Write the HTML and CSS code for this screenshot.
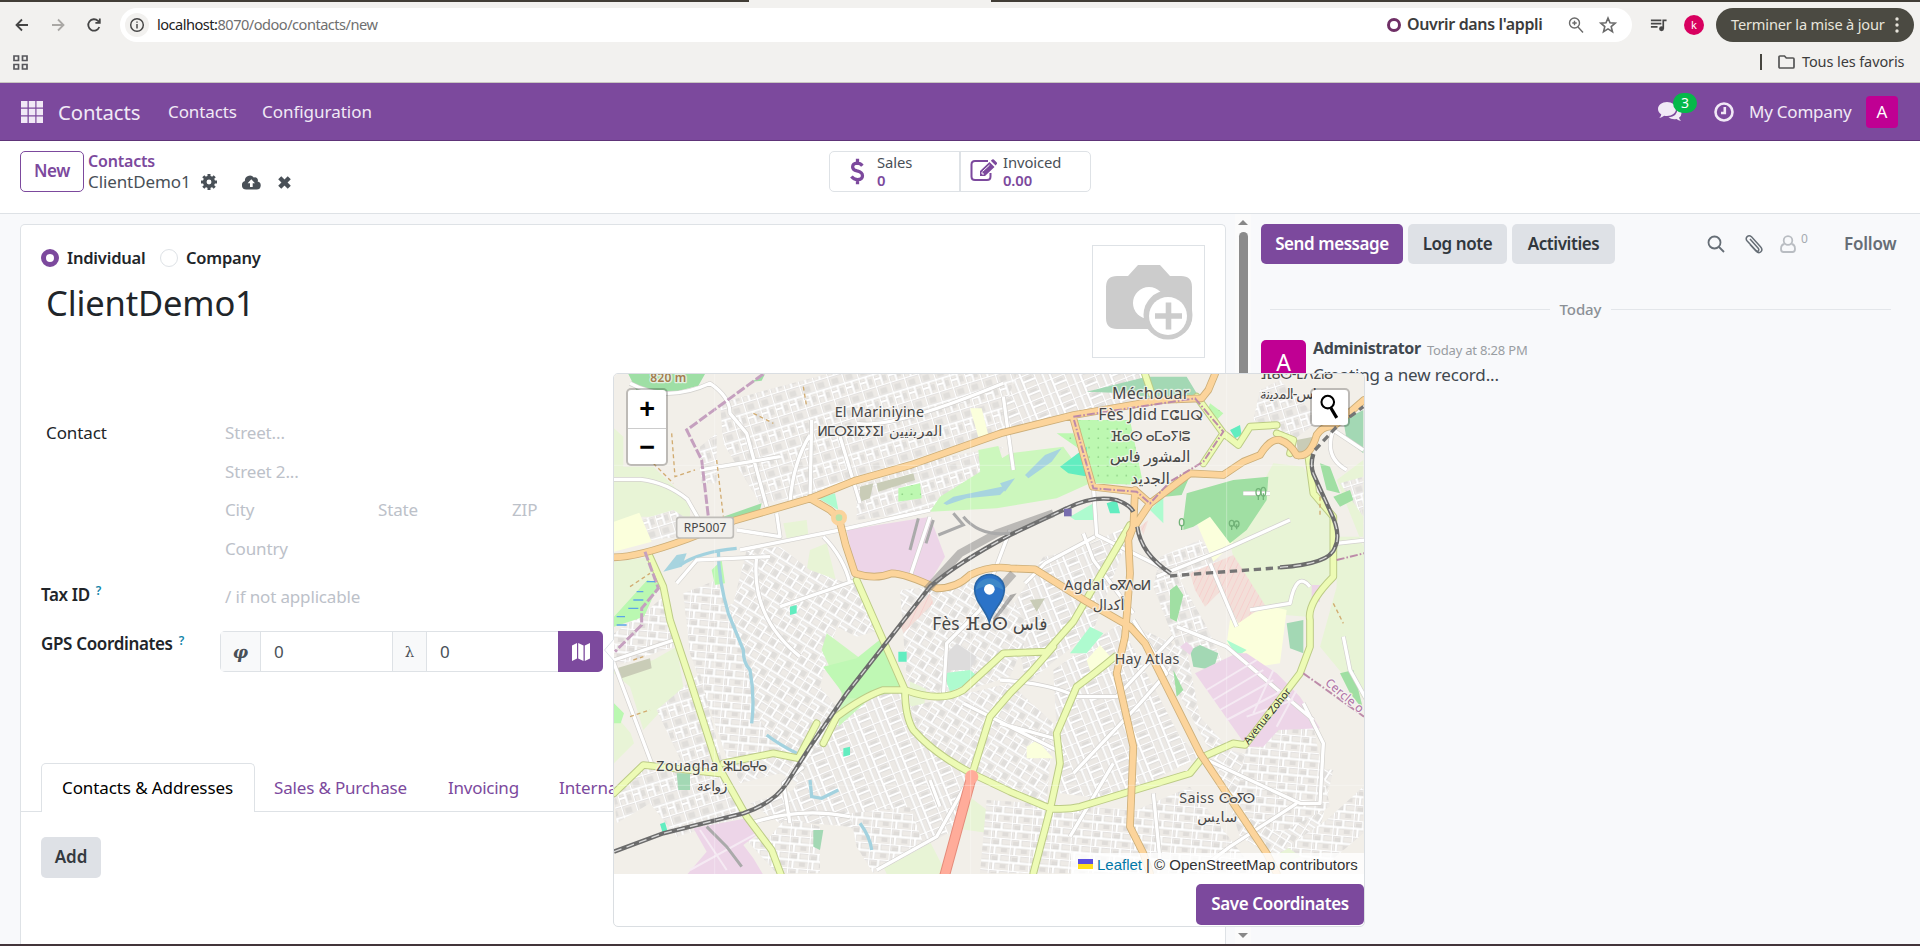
FILE: index.html
```
<!DOCTYPE html>
<html lang="en">
<head>
<meta charset="utf-8">
<title>Contacts</title>
<link rel="stylesheet" href="styles.css">
</head>
<body>
<div class="tabstrip"><span class="active-tab"></span></div>
<header class="browser">
  <div class="toolbar">
    <svg class="nav-ic" viewBox="0 0 20 20"><path d="M16 10H5M10 4.5 4.5 10l5.500 5.500"/></svg>
    <svg class="nav-ic off" viewBox="0 0 20 20"><path d="M4 10h11M10 4.500l5.500 5.500L10 15.500"/></svg>
    <svg class="nav-ic" viewBox="0 0 20 20"><path d="M15.300 12A5.700 5.700 0 1 1 14 5.900l1.500 1.600M15.800 3.500v4.400h-4.400"/></svg>
    <div class="omnibox">
      <span class="info"><svg viewBox="0 0 20 20"><circle cx="10" cy="10" r="7"/><path d="M10 9v5M10 6v1.600"/></svg></span>
      <span class="url"><b>localhost:</b>8070/odoo/contacts/new</span>
      <span class="open-app"><i></i><span>Ouvrir dans l'appli</span></span>
      <svg class="omni-ic zoom" viewBox="0 0 20 20"><circle cx="8.500" cy="8" r="5"/><path d="m12 12 5 5.500M8.500 5.800v4.400M6.300 8h4.400"/></svg>
      <svg class="omni-ic" viewBox="0 0 20 20"><path d="m10 3 2 4.800 5.200.4-4 3.400 1.300 5.100-4.500-2.800-4.500 2.800 1.300-5.100-4-3.400L8 7.800z"/></svg>
    </div>
    <svg class="queue" viewBox="0 0 20 20"><path d="M2 4.500h11M2 8h11M2 11.500h7M15 13.500V4.500h3.500" fill="none" stroke="#474747" stroke-width="1.800"/><circle cx="13.200" cy="13.500" r="2.600" fill="#474747"/></svg>
    <span class="profile">k</span>
    <span class="update"><span>Terminer la mise à jour</span><svg viewBox="0 0 4 18"><circle cx="2" cy="3" r="1.700"/><circle cx="2" cy="9" r="1.700"/><circle cx="2" cy="15" r="1.700"/></svg></span>
  </div>
  <div class="bookmarks">
    <svg class="apps" viewBox="0 0 15 15"><path d="M1 1h4.500v4.500H1zM9.500 1H14v4.500H9.500zM1 9.500h4.500V14H1zM9.500 9.500H14V14H9.500z"/></svg>
    <span class="divider"></span>
    <svg class="folder" viewBox="0 0 17 14"><path d="M1 12V2q0-1 1-1h4.500l1.800 2H15q1 0 1 1v8q0 1-1 1H2q-1 0-1-1z"/></svg>
    <span class="favs">Tous les favoris</span>
  </div>
</header>

<nav class="navbar">
  <svg class="grid-ic" viewBox="0 0 22 22"><path d="M0 0h6.500v6.500H0zM7.800 0h6.500v6.500H7.800zM15.500 0H22v6.500h-6.500zM0 7.800h6.500v6.500H0zM7.800 7.800h6.500v6.500H7.800zM15.500 7.800H22v6.500h-6.500zM0 15.500h6.500V22H0zM7.800 15.500h6.500V22H7.800zM15.500 15.500H22V22h-6.500z"/></svg>
  <span class="brand">Contacts</span>
  <span class="menu m1">Contacts</span>
  <span class="menu m2">Configuration</span>
  <span class="chat">
    <svg viewBox="0 0 24 20"><path d="M9 0c5 0 9 3 9 7s-4 7-9 7q-1.500 0-2.800-.3Q3.500 15.700 1.300 16q1.800-1.800 2-3.600Q0 10.300 0 7c0-4 4-7 9-7z"/><path d="M19.500 6q4 1.800 4 5.200 0 2.700-2.500 4.500.3 1.600 2 3.300-2.600-.3-4.600-2-4.400.8-7.900-1.600 9-.6 9-9.400z"/></svg>
    <span class="badge">3</span>
  </span>
  <svg class="clock" viewBox="0 0 20 20"><circle cx="10" cy="10" r="8.500"/><path d="M10.800 5v6H7"/></svg>
  <span class="company">My Company</span>
  <span class="user">A</span>
</nav>

<div class="control">
  <button class="btn-new">New</button>
  <div class="crumbs">
    <a>Contacts</a>
    <div class="crumb-row">
      <span>ClientDemo1</span>
      <svg class="gear" viewBox="0 0 16 16"><circle cx="8" cy="8" r="4.300" fill="none" stroke="#495057" stroke-width="3.700"/><path d="M8 0v3M8 13v3M0 8h3M13 8h3M2.300 2.300l2 2M11.700 11.700l2 2M2.300 13.700l2-2M11.700 4.300l2-2" stroke="#495057" stroke-width="3"/></svg>
      <svg class="cloud" viewBox="0 0 19 14"><path d="M15.600 6.100A3 3 0 0 0 11.800 2 5 5 0 0 0 2.900 5.600 4.300 4.300 0 0 0 4.300 14h10.400a4 4 0 0 0 .9-7.900z" fill="#495057"/><path d="M9.300 3.700 13 7.700h-2.300V11.500H8V7.700H5.600z" fill="#fff"/></svg>
      <svg class="times" viewBox="0 0 12 12"><path d="m1.600 1.600 8.800 8.800M10.400 1.600l-8.800 8.800"/></svg>
    </div>
  </div>
  <div class="stats">
    <div class="stat s1">
      <svg viewBox="0 0 16 27"><path d="M13.200 7.300Q11 4.600 7.700 4.600 2.800 4.800 2.800 8.600q0 3 4.700 4.300 5.800 1.400 5.800 5 0 4-5.300 4.200-4 0-6.500-3.200M8 0v5M8 22v5" fill="none" stroke="#7c499d" stroke-width="3.500"/></svg>
      <div><span>Sales</span><b>0</b></div>
    </div>
    <div class="stat s2">
      <svg viewBox="0 0 27 22"><path d="M18 2H5Q1.500 2 1.500 5.500v12Q1.500 21 5 21h12q3.500 0 3.500-3.500V14" fill="none" stroke="#7c499d" stroke-width="2"/><path d="M10 17v-5L19.500 3l5 5-9.500 9zM20.800 1.800l1.400-1.300q.8-.7 1.600 0l3 3q.7.800 0 1.600L25.600 6.600z" fill="#7c499d"/><path d="m12.500 12.500 7-6.500M12 13v2h2" stroke="#fff" fill="none"/></svg>
      <div><span>Invoiced</span><b>0.00</b></div>
    </div>
  </div>
</div>

<main class="content">
  <section class="sheet">
    <div class="sheet-top">
      <div>
        <div class="radios">
          <i class="radio on"></i><span class="r1">Individual</span>
          <i class="radio"></i><span class="r2">Company</span>
        </div>
        <h1>ClientDemo1</h1>
      </div>
      <div class="photo"><svg viewBox="0 0 88 76"><path d="M12 12h11L33 1h22l10 11h11q11 0 11 11v29q0 10-7 15H52l-9-2H12Q1 65 1 54V23Q1 12 12 12z" fill="#ccc"/><circle cx="44" cy="39" r="16" fill="#fff"/><circle cx="63" cy="51" r="24.500" fill="#ccc"/><circle cx="63" cy="52" r="19" fill="#fff"/><path d="M63.500 38.500v27M50 52h27" stroke="#ccc" stroke-width="5.600"/></svg></div>
    </div>
    <div class="form">
      <div class="frow"><span class="flabel plain">Contact</span><span class="ph">Street...</span></div>
      <div class="frow"><span class="flabel"></span><span class="ph">Street 2...</span></div>
      <div class="frow"><span class="flabel"></span><span class="ph city">City</span><span class="ph state">State</span><span class="ph">ZIP</span></div>
      <div class="frow"><span class="flabel"></span><span class="ph">Country</span></div>
      <div class="frow tax"><span class="flabel"><span class="tx">Tax ID</span><sup>?</sup></span><span class="ph">/ if not applicable</span></div>
      <div class="frow gps"><span class="flabel"><span class="gp">GPS Coordinates</span><sup>?</sup></span>
        <div class="group">
          <span class="addon phi">φ</span><span class="inp">0</span><span class="addon lam">λ</span><span class="inp">0</span>
          <button class="mapbtn"><svg viewBox="0 0 18 18"><path d="M0 2.500 5 0v15.500L0 18zM6.200 0l5.300 2.500V18l-5.300-2.500zM12.800 2.500 18 0v15.500L12.800 18z"/></svg></button>
        </div>
      </div>
    </div>
    <div class="tabs">
      <span class="tab t-on">Contacts &amp; Addresses</span><span class="tab t2">Sales &amp; Purchase</span><span class="tab t3">Invoicing</span><span class="tab">Internal Notes</span>
    </div>
    <button class="btn-add">Add</button>
  </section>
  <div class="scroll"><i class="up"></i><span class="thumb"></span><i class="down"></i></div>
  <aside class="chatter">
    <div class="chat-bar">
      <button class="send">Send message</button><button class="b-log">Log note</button><button class="b-act">Activities</button>
      <svg class="c-search" viewBox="0 0 18 18"><circle cx="7.500" cy="7.500" r="6"/><path d="m12 12 5 5"/></svg>
      <svg class="c-clip" viewBox="0 0 18 20"><path d="m5 5 8 9q1.500 1.800.3 2.800t-2.800-.7L2.200 7Q.2 4.500 2.200 2.600t4.300.2l9 10q2.600 3 .4 5t-5-.8L5 10.500"/></svg>
      <svg class="c-user" viewBox="0 0 16 18"><path d="M4.500 9Q1 9.500 1 14q0 3 2.500 3h9q2.500 0 2.500-3 0-4.500-3.500-5"/><circle cx="8" cy="5.500" r="4.300"/></svg>
      <span class="c-count">0</span><span class="follow">Follow</span>
    </div>
    <div class="today"><i></i><span>Today</span><i></i></div>
    <div class="msg">
      <span class="avatar">A</span>
      <div><p class="who"><b>Administrator</b><span>Today at 8:28 PM</span></p><p class="body">Creating a new record...</p></div>
    </div>
  </aside>
</main>
<div class="osbar"></div>

<div class="popover">
  <div class="map">
    <svg viewBox="12 12 2250 1500" class="map-art">
      <defs>
        <pattern id="ua" width="44" height="70" patternUnits="userSpaceOnUse" patternTransform="rotate(-17)"><path d="M0 0h44v70H0z" fill="#eeebe7"/><path d="M10 10h20v18H10zM22 44h16v18H22z" fill="#e0dedb"/><path d="M0 0h44M0 34h44M0 0v70M22 34v36M0 50h22" stroke="#d6d4d2" stroke-width="10" fill="none"/><path d="M0 0h44M0 34h44M0 0v70M22 34v36M0 50h22" stroke="#fff" stroke-width="7" fill="none"/></pattern>
        <pattern id="ub" width="52" height="60" patternUnits="userSpaceOnUse" patternTransform="rotate(32)"><path d="M0 0h52v60H0z" fill="#eeebe7"/><path d="M8 6h16v16H8zM30 36h16v18H30z" fill="#e0dedb"/><path d="M0 0h52M0 28h52M0 0v60M26 0v28M0 44h26v16" stroke="#d6d4d2" stroke-width="10" fill="none"/><path d="M0 0h52M0 28h52M0 0v60M26 0v28M0 44h26v16" stroke="#fff" stroke-width="7" fill="none"/></pattern>
        <pattern id="uc" width="40" height="84" patternUnits="userSpaceOnUse" patternTransform="rotate(68)"><path d="M0 0h40v84H0z" fill="#ece9e5"/><path d="M8 10h18v22H8z" fill="#dedcd9"/><path d="M0 0h40M0 42h40M0 0v84M20 0v42M0 62h40" stroke="#d5d3d1" stroke-width="10" fill="none"/><path d="M0 0h40M0 42h40M0 0v84M20 0v42M0 62h40" stroke="#fff" stroke-width="7" fill="none"/></pattern>
        <pattern id="ud" width="60" height="48" patternUnits="userSpaceOnUse" patternTransform="rotate(5)"><path d="M0 0h60v48H0z" fill="#eeebe7"/><path d="M8 8h20v12H8zM34 30h18v12H34z" fill="#dfdcd9"/><path d="M0 0h60M0 24h60M0 0v48M30 0v24M15 24v24" stroke="#d6d4d2" stroke-width="10" fill="none"/><path d="M0 0h60M0 24h60M0 0v48M30 0v24M15 24v24" stroke="#fff" stroke-width="7" fill="none"/></pattern>
        <pattern id="dots" width="28" height="28" patternUnits="userSpaceOnUse"><path d="M0 0h28v28H0z" fill="#bdf8b1"/><circle cx="9" cy="9" r="2.500" fill="#8ccf83"/></pattern>
        <pattern id="hatch" width="16" height="16" patternUnits="userSpaceOnUse" patternTransform="rotate(25)"><path d="M0 0h16v16H0z" fill="#f3dfd9"/><path d="M0 0v16" stroke="#f8caca" stroke-width="4"/></pattern>
      </defs>
      <path d="M0 0h2280v1520H0z" fill="#f2efe9"/>
      <!-- open land -->
      <g fill="#e8f4d6">
        <path d="M12 175 40 200v90h90l110 105v45H90l-78 20zM12 575l118-15 20 90-50 60-88 50zM130 870l70-40 20 120-120 130-40-130-48-40V900zM12 1030l50 60 10 30-60 60zM600 540l50-20 30 120-60 20-30-60zM520 460l70-10 5 45-65 10zM1040 1250l130 100-30 40-140-20zM820 1490l140-75 50 97H830zM1860 520l130-240 90 10 90 170-10 170-70 110-130-10-60-50zM2180 500h90v500l-140-170 50-180zM2180 330l80 200V270zM2000 1440l100-70 50 60-130 50zM900 870l50 70-10 90-40-20z"/>
      </g>
      <!-- built-up blocks -->
      <path d="M330 100l140-40 190-50h620l-40 150-490 160-170 60-130 20-110-180zM270 230l50-40v150h-45z" fill="url(#ua)"/>
      <path d="M1220 12h380l60 60-290 70-210 40zM1400 540l170-80-120 320-200 160-50-220 100-160z" fill="url(#uc)"/>
      <path d="M740 350l230-80 150-30 60-10-100 140-100 50-240 30zM90 450l100-30 80 50-60 30-90 10z" fill="url(#ua)"/>
      <path d="M410 540l100-10 90 70 110 40 30-10 70 150-70 20-60-30-50 180 90 110-140 190-70-40-120 30-60-160-90-260 0-60 130-60z" fill="url(#ub)"/>
      <path d="M220 670l100-40 60 140 60 270 70 90-150 60-120-340zM12 890l180-60-20-160-70 60-90 60z" fill="url(#ud)"/>
      <path d="M140 1020l130-110 70 280 60 150-200 60-80-100-100 60-8-80 90-90 110-20z" fill="url(#ua)"/>
      <path d="M610 1150l110-190 160 0 60 130 140 120-30 160-220 120-110-120-120-10-90 0-90-60 130-40z" fill="url(#uc)"/>
      <path d="M410 1410l70-10 50-60 100 30v140H500zM720 1330l180-20 40 110-150 90-50-80z" fill="url(#ud)"/>
      <path d="M870 660l300-30 90 150-60 140-200 60-110-50zM900 1010l300-70 130 120-20 240-250-100-120-90z" fill="url(#ub)"/>
      <path d="M1330 900l200-140 180 340 60 60-260 130-160-20z" fill="url(#uc)"/>
      <path d="M1130 1290l450 30 160-70 200 260h-830z" fill="url(#ud)"/>
      <path d="M1600 780l130 60 40 200 90 100 110 30 200 30-40 180-140 80-100-60-80-240z" fill="url(#ub)"/>
      <path d="M1910 1130l40-70 160 10 50 240-150 80-140-70zM2030 1430l120-80 110-100v140l-130 110z" fill="url(#ud)"/>
      <path d="M1650 560l120-50 60 60-120 60 80 140 50 110-140-50-70-180zM1950 60l60-30 120 120-80 60-120-60zM2190 340l70-20v120z" fill="url(#ua)"/>
      <!-- parks, woods, farmland, works -->
      <path d="M55 12h230l-20 35-75 20-110-5zM425 35l40-23-10 20zM340 440l115-40-5 20-100 30z" fill="#9edfa5"/>
      <path d="M12 455l76-27 37 87-113 30zM1080 115h35l20 80-30 5zM1760 460l65-30 45 90-60 55zM1860 750l130-40 40 10-20 160-70 10-90-70zM1250 1130l30-20 50 55-80 0zM1430 870l40-45 35 40-60 50z" fill="#fbffdc"/>
      <path d="M960 425l30-45 210-130 160-20 80 110-100 45-180 30zM1105 240l60-12 28 90-80 15zM650 790l120 90-35 40 50 60-100 90 10-100-60-130zM770 870l50-60 60 150-115 25-65-70z" fill="#ccf7bd"/>
      <path d="M640 890l100-25 75-60 70 150-125 30-50 0-60-80z" fill="#bff8b4"/>
      <path d="M12 740l100-110 35 10-45 100-90 30zM305 600l30-30 10 70-30 5zM12 1000l30 30-10 30h-20z" fill="#baf8b1"/>
      <path d="M1390 150h170l40 195-150-5zM1340 190h50l15 45zM865 355l65-15 5 45-70 10zM1800 100l40 30-20 20-30-20z" fill="url(#dots)"/>
      <path d="M1620 420l40-40v80zM625 385l50-15 10 50zM1000 910l80-10 30 25-90 40zM1380 850l60-80 40 20-50 60zM1380 440l70-40 5 50h-60zM1850 810l60 30-30 20z" fill="#aefbcf"/>
      <path d="M1350 290l80-60 5 90-60-10zM1490 400l30-10 10 40h-30zM540 710l20-5v25l-20 5zM865 845h25v30h-25zM700 1135l20-5v25l-20 5zM150 1362l15-5 8 28-15 4zM1860 180l30-15 5 30-20 10z" fill="#62edc0"/>
      <path d="M1720 450l10-80 140-40 105-10-5 70-60 90-50 40-60-80-50 30-30 10zM1665 380l60-60 20-15-30 70zM2130 280l30 10 30 80-40-10zM2170 380l50-20 10 30-40 20zM1680 660l20-15 20 30-20 80-20-10zM1690 900l30 60-20 20zM2190 910l40-10 30 120-40-50z" fill="#a0dfa3"/>
      <path d="M1430 65l180-45 120 0 30 50-60 30-150-30zM2200 150l60-30v130l-50-40zM1740 840l30-15 55 25-15 50-60-10zM2030 760l50-10v100l-40-15zM200 1210h40v50h-35zM610 1380h30l-10 60-20-10z" fill="#a3d8b4"/>
      <path d="M710 480l250-40 45 120-45 75-60-20-50-10-70 15-45-20zM250 1375l160-30 30 50-40 30 30 40 30 50H230l60-70zM1710 830l20-15 20 20-10 20zM2105 645h25v50h-25zM1755 910l125-60 30 0 90 60 70 70 60 95-125 5-45 50h-50z" fill="#edd5e8"/>
      <path d="M1740 610l130-55 95 150-80 55-50-100-50 50-30-50zM1590 470l25-20-15 45zM870 760l90-90 10 30-90 90z" fill="url(#hatch)"/>
      <path d="M20 895l100-30 5 30-90 30zM750 350l40-10-10 45-30 10zM800 340l110-30 5 20-110 35zM2060 210l50-10-5 40-40 30zM1260 690l45-5-25 40z" fill="#c9ccb7"/>
      <path d="M1010 850l30-30 60 40-20 40-70 0z" fill="#dddcdc"/>
      <!-- water -->
      <path d="M1245 315l60-60 50-20-30 40-70 50zM1000 400l30-20 170-35-30 30-100 10-60 20zM1170 340l45-15-30 40zM160 605l40-50 30-5-15 40z" fill="#a7d4df"/>
      <path d="M210 585q60-40 170-50M325 540q0 90 30 190l45 110q0 40 20 60 15 80 5 160M470 1095q40 30 90 55M600 1230l5 50 30 5 50-25M750 1360q30 40 35 80" fill="none" stroke="#a3d2df" stroke-width="10"/>
      <!-- lanes -->
      <g fill="none" stroke="#d3d1ce" stroke-width="14" stroke-linejoin="round"><path d="M12 328h80q80 10 140 60l40 70M60 40q110 60 240 0 60 40 60 90l50 60 60 220M270 300l240-40M540 395q10-120 60-200M600 390l5-240M690 200l60 200M740 160q100 20 440-120M1180 80l30 220M390 540l300-60 270-60M500 430l10 70-130-20M740 630l-230 80M640 500q60 60 80 140M960 440l-60 180M200 640l60-70 220-10M440 560q-20 180 130 300M12 870l180-60M12 880l120 320M540 1360l-20-120 60-50M720 1340q-150-30-300 20M800 1500l180-100 90-160M1450 345l10 150 200 100M1455 500l-150 80-60 60M1420 490l30 80 120 160M1640 620l200-80 200-90M1800 580l80 190M1700 770l150 60 260 220M1570 750l100 160-80 90-200 210M1170 930q150 10 230 50h120l170-180M1200 480l-90 240-100 100-10 160M1170 1060l180 50M1900 370l80 0M2180 520l90-10M1770 1160l300 140h60l10-180-60-120M2060 1300l-200 130-80 60M2260 240l-90-60q-30 80 40 120M1920 720l120-20q20-100 60-50M2200 800l20 100 50 90M1060 1000l300 150M1510 1180l-130 220M960 1230l30 80M1630 1270l20 200"/></g>
      <path fill="none" stroke="#fff" stroke-width="10" stroke-linejoin="round" d="M12 328h80q80 10 140 60l40 70M60 40q110 60 240 0 60 40 60 90l50 60 60 220M270 300l240-40M540 395q10-120 60-200M600 390l5-240M690 200l60 200M740 160q100 20 440-120M1180 80l30 220M390 540l300-60 270-60M500 430l10 70-130-20M740 630l-230 80M640 500q60 60 80 140M960 440l-60 180M200 640l60-70 220-10M440 560q-20 180 130 300M12 870l180-60M12 880l120 320M540 1360l-20-120 60-50M720 1340q-150-30-300 20M800 1500l180-100 90-160M1450 345l10 150 200 100M1455 500l-150 80-60 60M1420 490l30 80 120 160M1640 620l200-80 200-90M1800 580l80 190M1700 770l150 60 260 220M1570 750l100 160-80 90-200 210M1170 930q150 10 230 50h120l170-180M1200 480l-90 240-100 100-10 160M1170 1060l180 50M1900 370l80 0M2180 520l90-10M1770 1160l300 140h60l10-180-60-120M2060 1300l-200 130-80 60M2260 240l-90-60q-30 80 40 120M1920 720l120-20q20-100 60-50M2200 800l20 100 50 90M1060 1000l300 150M1510 1180l-130 220M960 1230l30 80M1630 1270l20 200"/>
      <path fill="none" stroke="#f5eaf3" stroke-width="6" d="M1790 960l150-90M1810 990l150-90M1830 1020l160-90M1850 1050l170-90M1910 1040l140-50M1990 900l-60 130M2060 960l-60 110M240 1500l200-110M270 1380l80 120"/>
      <!-- secondary and primary roads -->
      <g fill="none" stroke-linejoin="round" stroke-linecap="round">
        <path class="y0" d="M115 550l45 100 20 100 60 180 80 250 90 160 75 100 30 80M740 630l145 330q0 80 25 120 60 70 175 130l115 55 120 50q50 5 90-5l330-100 40-50 90-40 35 5 165-215 30-80v-80q-10-50 70-130v-180l-60-70-15-110M640 1120l40-80q80-60 140-80l65 0q110 40 175 0l120-110 130-5 80-90 170-290M1515 860q-60 50-115 90l-60 140 10 90-30 140-50 190M1090 1200l50-160 60-70 60-60 70-80M12 1270l88-85 230 25M340 1180l150-30 75 15 55-105M1605 12l20 60M1760 80l80 110-60 90M1840 190l45 35 35-55 80-5M2000 190l50 20-10 40" />
        <path class="y1" d="M115 550l45 100 20 100 60 180 80 250 90 160 75 100 30 80M740 630l145 330q0 80 25 120 60 70 175 130l115 55 120 50q50 5 90-5l330-100 40-50 90-40 35 5 165-215 30-80v-80q-10-50 70-130v-180l-60-70-15-110M640 1120l40-80q80-60 140-80l65 0q110 40 175 0l120-110 130-5 80-90 170-290M1515 860q-60 50-115 90l-60 140 10 90-30 140-50 190M1090 1200l50-160 60-70 60-60 70-80M12 1270l88-85 230 25M340 1180l150-30 75 15 55-105M1605 12l20 60M1760 80l80 110-60 90M1840 190l45 35 35-55 80-5M2000 190l50 20-10 40" />
        <path class="o0" d="M12 562q70 0 220-55l140-55 230-67 130-52 170-48 270-95 220-55 260-45 123-5 20-25 20-48M600 385l60 35 27 25 20 80 28 85q60 20 110 0 40 0 135 45 60 0 100-40 60-30 120-20l75 3 155 97 130 75 45 50 165 330 100 150 100 150 30 60M1390 145l58 205 132 15 40 35M1575 360l-5 110-15 40 5 100-15 190-25 110 50 220-10 240 40 80 20 60M1560 490l60-90 120-90 100 5 60-40 50-20q30-50 60-45 30 10 50 45 40 10 60-60 20-30 50-25l92-80"/>
        <path class="o1" d="M12 562q70 0 220-55l140-55 230-67 130-52 170-48 270-95 220-55 260-45 123-5 20-25 20-48M600 385l60 35 27 25 20 80 28 85q60 20 110 0 40 0 135 45 60 0 100-40 60-30 120-20l75 3 155 97 130 75 45 50 165 330 100 150 100 150 30 60M1390 145l58 205 132 15 40 35M1575 360l-5 110-15 40 5 100-15 190-25 110 50 220-10 240 40 80 20 60M1560 490l60-90 120-90 100 5 60-40 50-20q30-50 60-45 30 10 50 45 40 10 60-60 20-30 50-25l92-80"/>
        <circle cx="687" cy="443" r="17" fill="#b9e3a9" stroke="#fad39c" stroke-width="14"/>
        <path d="M1085 1220l-82 300" stroke="#e58b7a" stroke-width="32"/><path d="M1085 1220l-82 300" stroke="#ffac9a" stroke-width="26"/><circle cx="1085" cy="1220" r="20" fill="#ffac9a"/>
      </g>
      <!-- railways and boundaries -->
      <g fill="none">
        <path class="rail" d="M12 1445l148-55 240-60q90-30 130-90l70-110 110-160 250-320q80-70 240-155l170-80q80-40 150-25 40 15 50 35M1582 470q10 80 100 140M2010 592q150-10 165-60 20-40-15-110l-50-110q-10-30 0-60"/>
        <path class="rail-w" d="M12 1445l148-55 240-60q90-30 130-90l70-110 110-160 250-320q80-70 240-155l170-80q80-40 150-25 40 15 50 35M1582 470q10 80 100 140M2010 592q150-10 165-60 20-40-15-110l-50-110q-10-30 0-60"/>
        <path d="M1680 618l60-5 270-20M2115 240l65-70 80-60" stroke="#757575" stroke-width="10" stroke-dasharray="22 14"/>
        <path d="M950 660l100-110 110-60 170-60M1130 700l80-90" stroke="#777" stroke-opacity=".45" stroke-width="24"/>
        <path d="M925 445l-25 95M970 450l-22 70M985 495l75-30-30-35M1060 440q50 60 140 50M290 1370l60 60 45 60" stroke="#aaa" stroke-width="9"/>
        <path d="M460 12 230 180l45 90 20 170M105 545l40 110-50 60v50l-80 80" stroke="#c5a0bf" stroke-width="9" stroke-dasharray="28 7"/>
        <path d="M1390 140l365-55 85 100-60 90-100 60-60 65-40-35-130-10-58-205M2080 910l182 130M2180 570l82-20" stroke="#bd8ba9" stroke-width="6" stroke-dasharray="24 6 5 6"/>
        <path d="M60 650l60-40M185 190l10 130 60-20M130 280l60 60M320 270l20 170M430 130l60 30M580 50l10 60M2130 380v60M2170 700l30 60M70 870l30-10M60 1040l60-20" stroke="#d1ab70" stroke-width="4" stroke-dasharray="12 9"/>
        <path d="M20 740h25M55 715h30M20 765h30M70 690h30M110 635h25M80 665h20" stroke="#5ca5e8" stroke-width="4"/>
        <path d="M12 286h2250M12 1246h2250M314 12v1500M1082 12v1500M1850 12v1500" stroke="#fff" stroke-opacity=".45" stroke-width="2"/>
      </g>
      <path d="M1362 416h23v23h-23z" fill="#786dae"/>
      <g fill="none" stroke="#72b378" stroke-width="4"><path d="M1945 390v-15M1960 390v-20M1715 480v-15M1865 480v-15M1880 478v-15"/><ellipse cx="1945" cy="367" rx="7" ry="11"/><ellipse cx="1960" cy="365" rx="7" ry="13"/><ellipse cx="1715" cy="457" rx="7" ry="11"/><ellipse cx="1865" cy="460" rx="7" ry="9"/><ellipse cx="1880" cy="462" rx="7" ry="9"/></g>
      <rect x="200" y="442" width="170" height="62" rx="8" fill="#f2f0ec" stroke="#bfbdb9" stroke-width="5"/>
      <!-- place names -->
      <g class="names" text-anchor="middle">
        <text x="285" y="486" class="shield" textLength="128">RP5007</text>
        <text x="175" y="37" class="peak" textLength="108">820 m</text>
        <text x="808" y="140" textLength="268">El Mariniyine</text>
        <text x="722" y="199" class="tif" textLength="200">ⵍⵎⵔⵉⵏⵉⵢⵉⵏ</text><text x="917" y="197" textLength="160">المرينيين</text>
        <text x="1622" y="88" class="mid" textLength="232">Méchouar</text>
        <text x="1553" y="150" class="mid" textLength="176">Fès Jdid</text><text x="1715" y="150" class="tif" textLength="128">ⵎⵛⵡⵕ</text>
        <text x="1621" y="213" class="tif" textLength="242">ⴼⴰⵙ ⴰⵎⴰⵢⵏⵓ</text>
        <text x="1620" y="277" class="mid" textLength="242">المشور فاس</text>
        <text x="1621" y="341" class="mid" textLength="118">الجديد</text>
        <text x="2060" y="27" class="tif" textLength="220">ⴼⴰⵙ-ⵎⴷⵉⵏⴰ</text>
        <text x="2044" y="87" textLength="190">فاس-المدينة</text>
        <text x="1423" y="661" textLength="120">Agdal</text><text x="1561" y="661" class="tif" textLength="126">ⴰⴳⴷⴰⵍ</text>
        <text x="1496" y="719" textLength="95">أكدال</text>
        <text x="1140" y="780" class="big" textLength="346"><tspan>Fès </tspan><tspan class="tif">ⴼⴰⵙ</tspan><tspan> فاس</tspan></text>
        <text x="1611" y="881" textLength="194">Hay Atlas</text>
        <text x="232" y="1204" textLength="186">Zouagha</text><text x="405" y="1204" class="tif" textLength="134">ⵣⵡⴰⵖⴰ</text>
        <text x="306" y="1262" textLength="92">زواعة</text>
        <text x="1760" y="1298" textLength="104">Saiss</text><text x="1881" y="1298" class="tif" textLength="110">ⵙⴰⵢⵙ</text>
        <text x="1822" y="1356" textLength="120">سايس</text>
        <text class="street" transform="translate(1980 1045) rotate(-51)" textLength="205">Avenue Zohor</text>
        <text class="cercle" transform="translate(2196 986) rotate(40)" textLength="138">Cercle o</text>
      </g>
      <!-- position marker -->
      <path d="M1150 760l70-90-20 5-50 70z" fill="#555" opacity=".45"/>
      <path d="M1138 756c-12-40-44-60-44-98a44 44 0 0 1 89 0c0 38-33 58-45 98z" fill="#2b73c8" stroke="#2a66a5" stroke-width="5"/>
      <path d="M1097 660a42 42 0 0 1 83 0q-42-24-83 0z" fill="#3d87c8"/>
      <circle cx="1138" cy="658" r="16" fill="#fff"/>
    </svg>
    <div class="zoomctl"><button>+</button><button>−</button></div>
    <button class="geosearch"><svg viewBox="0 0 24 30"><circle cx="9.500" cy="9" r="7" fill="none" stroke="#000" stroke-width="2.300"/><path d="m13 15.500 6.500 11" stroke="#000" stroke-width="3.600"/></svg></button>
    <div class="attrib"><svg viewBox="0 0 15 10"><path d="M0 0h15v5H0z" fill="#5b4fe0"/><path d="M0 5h15v5H0z" fill="#ffe01c"/></svg><a>Leaflet</a><span>| © OpenStreetMap contributors</span></div>
  </div>
  <div class="pop-foot"><button class="save">Save Coordinates</button></div>
  <svg class="arrow" viewBox="0 0 10 22"><path d="M10 0v22L.5 11z" fill="#fff"/><path d="M10 0 .5 11 10 22" fill="none" stroke="#dee2e6"/></svg>
</div>
</body>
</html>
```
FILE: styles.css
```
* { box-sizing: border-box; }
html, body { margin: 0; height: 946px; overflow: hidden; }
body { font-family: "Noto Sans", "DejaVu Sans", sans-serif; font-size: 17px; letter-spacing: -.1px; color: #212529; background: #f8f9fb; display: flex; flex-direction: column; line-height: 1.2; }
button { font: inherit; letter-spacing: inherit; border: 0; padding: 0; }
svg { flex: none; display: block; }
p, h1 { margin: 0; font-weight: 400; }
span, button, a, b { white-space: nowrap; }

.tabstrip { height: 2px; background: #413d36; flex: none; }
.active-tab { display: block; width: 242px; height: 2px; margin-left: 749px; background: #f2f1ef; }
.browser { background: #f2f1ef; height: 81px; flex: none; border-bottom: 1px solid #c9c6c1; color: #3c3c3c; }
.toolbar { display: flex; align-items: center; height: 46px; padding: 0 6px 0 12px; }
.nav-ic { width: 20px; height: 20px; margin-right: 16px; fill: none; stroke: #454545; stroke-width: 1.8; }
.nav-ic.off { stroke: #aaa8a5; }
.omnibox { width: 1512px; height: 34px; border-radius: 17px; background: #fff; display: flex; align-items: center; padding: 0 14px 0 5px; }
.info { width: 24px; height: 24px; border-radius: 50%; background: #f2f1ef; display: grid; place-items: center; }
.info svg { width: 18px; height: 18px; fill: none; stroke: #454545; stroke-width: 1.6; }
.url { margin-left: 8px; font-size: 14.6px; letter-spacing: -.51px; color: #6f6f6f; flex: 1; }
.url b { font-weight: 400; color: #222; }
.open-app { display: flex; align-items: center; gap: 6px; font-size: 16px; letter-spacing: -.35px; font-weight: 600; margin-right: 23px; }
.open-app i { width: 14px; height: 14px; border: 3px solid #6f2f66; border-radius: 50%; }
.open-app span { width: 136px; }
.omni-ic { width: 20px; height: 20px; fill: none; stroke: #6a6a6a; stroke-width: 1.6; }
.omni-ic.zoom { margin-right: 12px; stroke-width: 1.4; }
.queue { width: 19px; height: 19px; margin-left: 17px; }
.profile { width: 20px; height: 20px; border-radius: 50%; background: #d8005f; color: #fff; font-size: 11px; display: grid; place-items: center; margin: 0 12px 0 16px; }
.update { width: 198px; height: 34px; border-radius: 17px; background: #4b4a42; color: #e8e5dc; display: flex; align-items: center; justify-content: space-between; padding: 0 15px; font-size: 14.600px; letter-spacing: -.17px; }
.update svg { width: 4px; height: 18px; fill: #e8e5dc; }
.bookmarks { display: flex; align-items: center; height: 28px; padding: 0 14px 0 13px; font-size: 14.500px; }
.apps { width: 15px; height: 15px; fill: none; stroke: #57575c; stroke-width: 1.7; margin-right: auto; }
.divider { width: 2px; height: 16px; background: #46453f; margin-right: 16px; }
.folder { width: 17px; height: 14px; fill: none; stroke: #555; stroke-width: 1.7; margin-right: 7px; }
.favs { width: 104px; letter-spacing: -.1px; }

.navbar { height: 58px; flex: none; background: #7c499d; border-bottom: 1px solid #5e3478; display: flex; align-items: center; color: #f1e9f6; padding: 1px 19px 0 21px; }
.grid-ic { width: 22px; height: 22px; fill: #f1e9f6; }
.brand { width: 110px; margin-left: 15px; font-size: 20.300px; }
.m1 { width: 94px; }
.m2 { letter-spacing: -.03px; }
.chat { margin-left: auto; display: flex; width: 39px; position: relative; }
.chat svg { width: 24px; height: 20px; fill: #f1e9f6; }
.badge { position: absolute; left: 15px; top: -9px; width: 24px; height: 20px; border-radius: 10px; background: #06b84a; color: #fff; font-size: 14px; line-height: 20px; text-align: center; }
.clock { width: 20px; height: 20px; fill: none; stroke: #f1e9f6; stroke-width: 2.600; margin: 0 15px 0 17px; }
.company { width: 101px; letter-spacing: -.22px; }
.user { width: 32px; height: 32px; border-radius: 4px; background: #c00093; color: #fff; display: grid; place-items: center; margin: 0 3px 0 16px; }

.control { height: 73px; flex: none; background: #fff; border-bottom: 1px solid #dee2e6; display: flex; align-items: flex-start; padding: 10px 20px; }
.btn-new { width: 64px; height: 41px; background: #fff; border: 1px solid #7c499d; border-radius: 5px; color: #7c499d; font-weight: 600; letter-spacing: -.4px; }
.crumbs { margin-left: 4px; width: 741px; color: #495057; font-size: 17px; }
.crumbs a { display: block; color: #7c499d; font-weight: 600; height: 21px; line-height: 20px; font-size: 16px; letter-spacing: -.2px; }
.crumb-row { display: flex; align-items: center; height: 20px; }
.crumb-row span { width: 113px; }
.gear { width: 16px; height: 16px; }
.cloud { width: 19px; height: 15px; margin-left: 25px; }
.times { width: 13px; height: 13px; margin-left: 17px; stroke: #495057; stroke-width: 4; }
.stats { display: flex; width: 262px; height: 41px; border: 1px solid #dee2e6; border-radius: 5px; }
.stat { display: flex; align-items: center; font-size: 14.800px; color: #495057; }
.stat div { display: grid; line-height: 18px; margin-top: -1px; }
.stat b { color: #7c499d; font-weight: 600; }
.s1 { width: 131px; border-right: 2px solid #dee2e6; padding-left: 20px; }
.s1 svg { width: 15px; height: 27px; margin-right: 12px; margin-top: -1px; }
.s2 { padding-left: 9px; }
.s2 svg { width: 27px; height: 22px; margin: -3px 6px 0 0; }

.content { height: 730px; flex: none; display: flex; padding-left: 20px; }
.sheet { margin-top: 10px; width: 1206px; background: #fff; border: 1px solid #dee2e6; border-bottom: 0; border-radius: 5px 5px 0 0; }
.sheet-top { display: flex; justify-content: space-between; height: 189px; padding: 20px 20px 0 20px; }
.radios { display: flex; align-items: center; height: 26px; font-weight: 600; font-size: 16.500px; letter-spacing: -.2px; }
.radio { width: 18px; height: 18px; border-radius: 50%; border: 1px solid #dee2e6; margin-right: 8px; }
.radio.on { border: 5.500px solid #7c499d; }
.r1 { width: 93px; }
h1 { font-size: 34.500px; line-height: 46px; margin: 9px 0 0 5px; letter-spacing: -.15px; }
.photo { width: 113px; height: 113px; border: 1px solid #dee2e6; display: grid; place-items: center; }
.photo svg { width: 88px; height: 76px; margin-top: 1px; }
.form { padding-left: 20px; height: 349px; }
.frow { display: flex; align-items: center; height: 38.600px; }
.flabel { width: 184px; font-weight: 600; display: flex; align-items: center; }
.flabel.plain { font-weight: 400; padding-left: 5px; }
.flabel sup { font-size: 12px; color: #1284a8; margin: -8px 0 0 6px; line-height: 12px; }
.ph { color: #bcc1c9; font-size: 17px; letter-spacing: -.15px; }
.city { width: 153px; }
.state { width: 134px; }
.tax { height: 52px; margin-top: 3px; }
.tax .flabel { margin-top: -5px; letter-spacing: -.35px; }
.gps { height: 50px; align-items: flex-start; margin-top: 9px; }
.gps .flabel { width: 179px; margin-top: 2px; }
.gp { letter-spacing: -.35px; }
.group { display: flex; width: 383px; height: 41px; border: 1px solid #dee2e6; border-right: 0; border-radius: 5px; margin-top: -1px; color: #495057; }
.addon { background: #f8f9fa; border-right: 1px solid #dee2e6; display: grid; place-items: center; font-family: "DejaVu Serif", serif; }
.phi { width: 40px; font-weight: 700; font-style: italic; }
.lam { width: 35px; border-left: 1px solid #dee2e6; font-size: 15px; }
.inp { width: 131px; padding-left: 13px; line-height: 40px; }
.mapbtn { width: 45px; height: 41px; margin: -1px 0; background: #7c499d; border-radius: 0 5px 5px 0; display: grid; place-items: center; }
.mapbtn svg { width: 18px; height: 18px; fill: #fff; }
.tabs { height: 49px; display: flex; border-bottom: 1px solid #dee2e6; padding-left: 20px; color: #7c499d; line-height: 49px; }
.tab { display: block; }
.t-on { width: 214px; height: 49px; border: 1px solid #dee2e6; border-bottom: 0; border-radius: 5px 5px 0 0; background: #fff; color: #000; padding-left: 20px; line-height: 47px; }
.t2 { width: 174px; margin-left: 19px; letter-spacing: -.17px; }
.t3 { width: 111px; letter-spacing: -.25px; }
.btn-add { display: block; margin: 25px 0 0 20px; width: 60px; height: 41px; border-radius: 5px; background: #dee1e6; color: #343a40; font-weight: 600; }

.scroll { width: 16px; margin-left: 9px; background: #fbfbfb; display: flex; flex-direction: column; align-items: center; }
.scroll i { border: 5px solid transparent; width: 0; height: 0; }
.scroll .up { border-bottom-color: #888; margin-top: 1px; }
.thumb { width: 9px; height: 600px; border-radius: 5px; background: #8b8b8b; margin-top: 7px; margin-bottom: auto; }
.scroll .down { border-top-color: #888; margin-bottom: 1px; }

.chatter { margin-left: 10px; width: 659px; padding-top: 10px; }
.chat-bar { display: flex; align-items: center; height: 40px; color: #666e76; }
.chat-bar button { height: 40px; border-radius: 5px; background: #dee1e6; color: #31373d; font-weight: 600; font-size: 17px; letter-spacing: -.43px; margin-right: 5px; }
.chat-bar .send { width: 142px; background: #7c499d; color: #fff; }
.chat-bar .b-log { width: 99px; }
.chat-bar .b-act { width: 103px; }
.chat-bar svg { fill: none; stroke: #666e76; stroke-width: 1.800; }
.c-search { width: 18px; height: 18px; margin-left: 87px; }
.chat-bar .c-clip { width: 18px; height: 20px; margin-left: 20px; stroke-width: 1.500; }
.chat-bar .c-user { width: 16px; height: 18px; margin-left: 17px; stroke: #b9bdc2; }
.c-count { font-size: 12px; margin: -10px 0 0 5px; color: #a5aab0; width: 43px; }
.follow { font-weight: 600; letter-spacing: -.2px; }
.today { display: flex; align-items: center; gap: 10px; margin: 35px 29px 0 9px; height: 20px; font-size: 15px; font-weight: 500; color: #8b9096; }
.today i { flex: 1; border-top: 1px solid #e3e6ea; }
.msg { display: flex; margin-top: 21px; color: #41484f; }
.avatar { width: 45px; height: 45px; background: #c00093; color: #fff; border-radius: 5px; font-size: 23px; display: grid; place-items: center; margin-right: 7px; }
.who { display: flex; align-items: center; height: 18px; font-size: 16px; }
.who b { width: 114px; letter-spacing: -.35px; font-weight: 700; }
.who span { font-size: 13px; color: #999da2; letter-spacing: -.2px; padding-top: 3px; }
.body { height: 26px; margin-top: 5px; line-height: 24px; font-size: 17px; letter-spacing: -.15px; }
.osbar { height: 2px; background: #43353a; }

.popover { position: absolute; left: 613px; top: 373px; width: 752px; height: 554px; background: #fff; border: 1px solid #dadee2; border-radius: 5px; }
.map { position: relative; width: 750px; height: 500px; overflow: hidden; border-radius: 4px 4px 0 0; }
.map-art { width: 750px; height: 500px; }
.y0 { stroke: #bccb86; stroke-width: 23; }
.y1 { stroke: #edfbb5; stroke-width: 17; }
.o0 { stroke: #ccae78; stroke-width: 23; }
.o1 { stroke: #fcd49b; stroke-width: 18; }
.rail { stroke: #6c6c6c; stroke-width: 13; }
.rail-w { stroke: #d8d8d8; stroke-width: 4; stroke-dasharray: 24 16; }
.names text { font-family: "Noto Sans", "DejaVu Sans", sans-serif; font-size: 43px; letter-spacing: 0; fill: #484848; stroke: #f7f5f2; stroke-opacity: .75; stroke-width: 8px; paint-order: stroke; stroke-linejoin: round; }
.names .tif { font-family: "DejaVu Sans", sans-serif; font-size: 43px; }
.names .mid { font-size: 48px; }
.names .big { font-size: 52px; }
.names .big .tif { font-size: 54px; }
.names .shield { font-size: 36px; stroke: none; }
.names .peak { font-size: 36px; font-weight: 600; fill: #a57c50; }
.names .street { font-size: 31px; stroke: none; fill: #333; }
.names .cercle { font-size: 36px; fill: #ae6fa5; }
.zoomctl { position: absolute; left: 12px; top: 14px; width: 42px; height: 78px; border: 2px solid rgba(0,0,0,.22); background-clip: padding-box; background-color: #fff; border-radius: 5px; display: grid; }
.zoomctl button { background: none; font: 700 27px/38px "Liberation Sans", sans-serif; color: #000; }
.zoomctl button + button { border-top: 1px solid #ccc; line-height: 36px; }
.geosearch { position: absolute; right: 14px; top: 14px; width: 40px; height: 39px; border: 2px solid rgba(0,0,0,.22); background: #fff; background-clip: padding-box; border-radius: 5px; display: grid; place-items: center; }
.geosearch svg { width: 22px; height: 27px; }
.attrib { position: absolute; right: 0; bottom: 0; height: 21px; width: 293px; background: rgba(255,255,255,.82); display: flex; align-items: center; padding: 1px 0 0 7px; font: 15px "Liberation Sans", sans-serif; letter-spacing: 0; color: #333; gap: 4px; }
.attrib svg { width: 15px; height: 10px; }
.attrib a { color: #0078a8; }
.pop-foot { display: flex; justify-content: flex-end; padding-top: 10px; }
.save { width: 168px; height: 41px; border-radius: 5px; background: #7c499d; color: #fff; font-weight: 600; letter-spacing: -.35px; }
.arrow { position: absolute; left: -10px; top: 265px; width: 10px; height: 22px; }
```
